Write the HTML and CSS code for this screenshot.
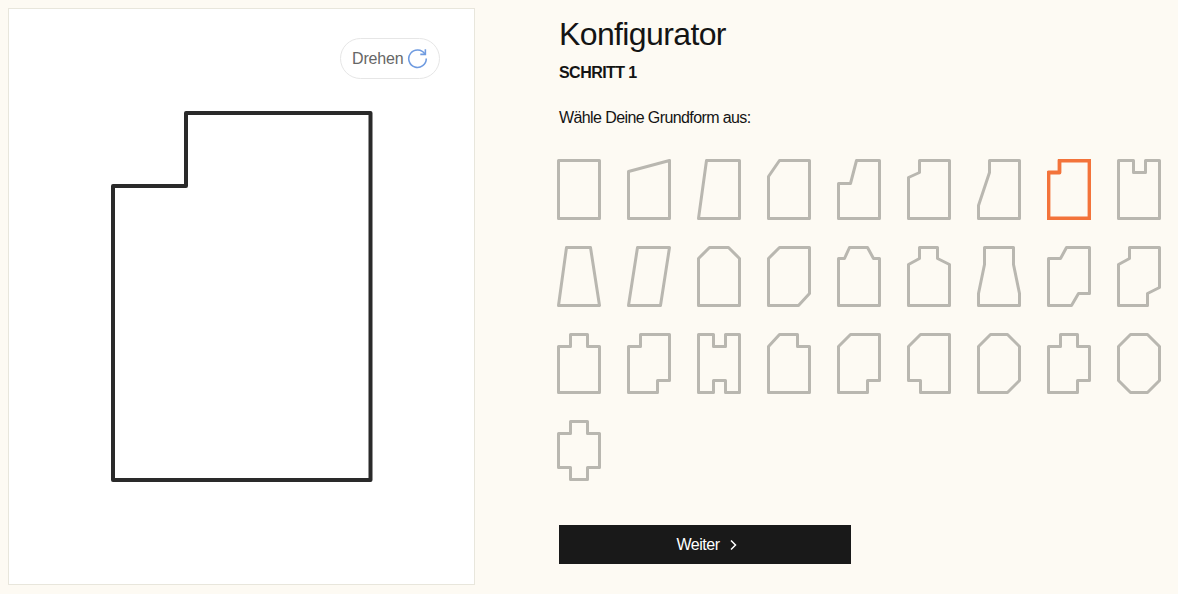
FILE: index.html
```html
<!DOCTYPE html>
<html lang="de">
    <head>
        <meta charset="UTF-8" />
        <title>Konfigurator</title>
        <link rel="stylesheet" href="styles.css">
    </head>
    <body>
        <div class="page">
            <div class="preview">
                <button class="turn_btn">Drehen
                    <svg class="turn_icon" viewBox="0 0 24 24"><path d="M20.4 6.8A10 10 0 1 0 22 12"/><path d="M21 1.5v5.8h-5.8"/></svg>
                </button>
                <svg class="big_shape" viewBox="-3 -3 264 373"><polygon points="73,0 257.5,0 257.5,367 0,367 0,73 73,73"/></svg>
            </div>
            <div class="config">
                <h1>Konfigurator</h1>
                <h2>SCHRITT 1</h2>
                <p class="hint">Wähle Deine Grundform aus:</p>
                <div class="shapes">
                    <!-- reihe 1 -->
                    <svg class="shape" viewBox="-1.5 -1.5 44 61"><polygon points="0,0 41,0 41,58 0,58"/></svg>
                    <svg class="shape" viewBox="-1.5 -1.5 44 61"><polygon points="0,11 41,0 41,58 0,58"/></svg>
                    <svg class="shape" viewBox="-1.5 -1.5 44 61"><polygon points="8,0 41,0 41,58 0,58"/></svg>
                    <svg class="shape" viewBox="-1.5 -1.5 44 61"><polygon points="11,0 41,0 41,58 0,58 0,16"/></svg>
                    <svg class="shape" viewBox="-1.5 -1.5 44 61"><polygon points="18,0 41,0 41,58 0,58 0,23 12,23"/></svg>
                    <svg class="shape" viewBox="-1.5 -1.5 44 61"><polygon points="11,0 41,0 41,58 0,58 0,17 11,12"/></svg>
                    <svg class="shape" viewBox="-1.5 -1.5 44 61"><polygon points="11,0 41,0 41,58 0,58 0,45 11,12"/></svg>
                    <svg class="shape selected" viewBox="-1.5 -1.5 44 61"><polygon points="11,0 41,0 41,58 0,58 0,12 11,12"/></svg>
                    <svg class="shape" viewBox="-1.5 -1.5 44 61"><polygon points="0,0 15,0 15,12 27,12 27,0 41,0 41,58 0,58"/></svg>
                    <!-- reihe 2 -->
                    <svg class="shape" viewBox="-1.5 -1.5 44 61"><polygon points="8,0 32,0 41,58 0,58"/></svg>
                    <svg class="shape" viewBox="-1.5 -1.5 44 61"><polygon points="9,0 41,0 32,58 0,58"/></svg>
                    <svg class="shape" viewBox="-1.5 -1.5 44 61"><polygon points="11,0 30,0 41,11 41,58 0,58 0,11"/></svg>
                    <svg class="shape" viewBox="-1.5 -1.5 44 61"><polygon points="11,0 41,0 41,46 30,58 0,58 0,11"/></svg>
                    <svg class="shape" viewBox="-1.5 -1.5 44 61"><polygon points="11,0 29,0 35,11 41,11 41,58 0,58 0,11 6,11"/></svg>
                    <svg class="shape" viewBox="-1.5 -1.5 44 61"><polygon points="11,0 29,0 29,11 41,17 41,58 0,58 0,17 11,11"/></svg>
                    <svg class="shape" viewBox="-1.5 -1.5 44 61"><polygon points="6,0 35,0 35,17 41,46 41,58 0,58 0,46 6,17"/></svg>
                    <svg class="shape" viewBox="-1.5 -1.5 44 61"><polygon points="18,0 41,0 41,46 30,46 23,58 0,58 0,11 12,11"/></svg>
                    <svg class="shape" viewBox="-1.5 -1.5 44 61"><polygon points="11,0 41,0 41,40 29,46 29,58 0,58 0,17 11,11"/></svg>
                    <!-- reihe 3 -->
                    <svg class="shape" viewBox="-1.5 -1.5 44 61"><polygon points="12,0 29,0 29,12 41,12 41,58 0,58 0,12 12,12"/></svg>
                    <svg class="shape" viewBox="-1.5 -1.5 44 61"><polygon points="12,0 41,0 41,46 29,46 29,58 0,58 0,12 12,12"/></svg>
                    <svg class="shape" viewBox="-1.5 -1.5 44 61"><polygon points="0,0 15,0 15,12 27,12 27,0 41,0 41,58 27,58 27,46 15,46 15,58 0,58"/></svg>
                    <svg class="shape" viewBox="-1.5 -1.5 44 61"><polygon points="11,0 29,0 29,12 41,12 41,58 0,58 0,12"/></svg>
                    <svg class="shape" viewBox="-1.5 -1.5 44 61"><polygon points="12,0 41,0 41,46 29,46 29,58 0,58 0,12"/></svg>
                    <svg class="shape" viewBox="-1.5 -1.5 44 61"><polygon points="12,0 41,0 41,58 12,58 12,46 0,46 0,12"/></svg>
                    <svg class="shape" viewBox="-1.5 -1.5 44 61"><polygon points="12,0 29,0 41,12 41,46 29,58 0,58 0,12"/></svg>
                    <svg class="shape" viewBox="-1.5 -1.5 44 61"><polygon points="12,0 29,0 29,12 41,12 41,46 29,46 29,58 0,58 0,12 12,12"/></svg>
                    <svg class="shape" viewBox="-1.5 -1.5 44 61"><polygon points="12,0 29,0 41,12 41,46 29,58 12,58 0,46 0,12"/></svg>
                    <!-- reihe 4 -->
                    <svg class="shape" viewBox="-1.5 -1.5 44 61"><polygon points="12,0 29,0 29,12 41,12 41,46 29,46 29,58 12,58 12,46 0,46 0,12 12,12"/></svg>
                </div>
                <button class="next_btn">Weiter
                    <svg class="next_icon" viewBox="0 0 8 12"><path d="M2 1.5 6.5 6 2 10.5"/></svg>
                </button>
            </div>
        </div>
    </body>
</html>
```

FILE: styles.css
```css
* {
    box-sizing: border-box;
}
html, body {
    height: 100%;
}
body {
    margin: 0;
    padding: 8px;
    background-color: #fdfaf3;
    color: #141414;
    font-family: "Liberation Sans", Arial, sans-serif;
    overflow: hidden;
}
.page {
    display: flex;
    height: 578px;
}
.preview {
    position: relative;
    display: flex;
    align-items: center;
    justify-content: center;
    width: 467px;
    height: 577px;
    background-color: #fff;
    border: 1px solid #e8e6dc;
}
.turn_btn {
    position: absolute;
    top: 29px;
    right: 34px;
    display: flex;
    align-items: center;
    justify-content: space-between;
    width: 100px;
    height: 41px;
    padding: 0 11px 0 11px;
    background-color: #fff;
    border: 1px solid #e6e6e6;
    border-radius: 21px;
    color: #666;
    font-family: inherit;
    font-size: 16px;
    letter-spacing: -0.15px;
}
.turn_icon {
    width: 21px;
    height: 21px;
    fill: none;
    stroke: #6f9be0;
    stroke-width: 1.8;
}
.big_shape {
    width: 264px;
    height: 373px;
}
.big_shape polygon {
    fill: none;
    stroke: #2a2a2a;
    stroke-width: 4;
    stroke-linejoin: round;
}
.config {
    display: flex;
    flex-direction: column;
    align-items: flex-start;
    margin-left: 84px;
}
h1 {
    margin: 7px 0 0 0;
    font-size: 32px;
    line-height: 38px;
    font-weight: normal;
    letter-spacing: -0.62px;
}
h2 {
    margin: 11px 0 0 0;
    font-size: 16px;
    line-height: 18px;
    font-weight: bold;
    letter-spacing: -0.55px;
}
.hint {
    margin: 27px 0 0 0;
    font-size: 16px;
    line-height: 18px;
    letter-spacing: -0.6px;
}
.shapes {
    display: grid;
    grid-template-columns: repeat(9, 44px);
    gap: 26px;
    margin: 32px 0 0 -2px;
}
.shape {
    display: block;
    width: 44px;
    height: 61px;
}
.shape polygon {
    fill: none;
    stroke: #b9b7b0;
    stroke-width: 3;
    stroke-linejoin: round;
}
.shape.selected polygon {
    stroke: #f3733a;
    stroke-width: 3.8;
}
.next_btn {
    display: flex;
    align-items: center;
    justify-content: center;
    gap: 9px;
    width: 292px;
    height: 39px;
    margin-top: 44px;
    padding-left: 9px;
    background-color: #191919;
    border: none;
    color: #fff;
    font-family: inherit;
    font-size: 16px;
    letter-spacing: -0.45px;
}
.next_icon {
    width: 8px;
    height: 12px;
    fill: none;
    stroke: #fff;
    stroke-width: 1.5;
}
```
